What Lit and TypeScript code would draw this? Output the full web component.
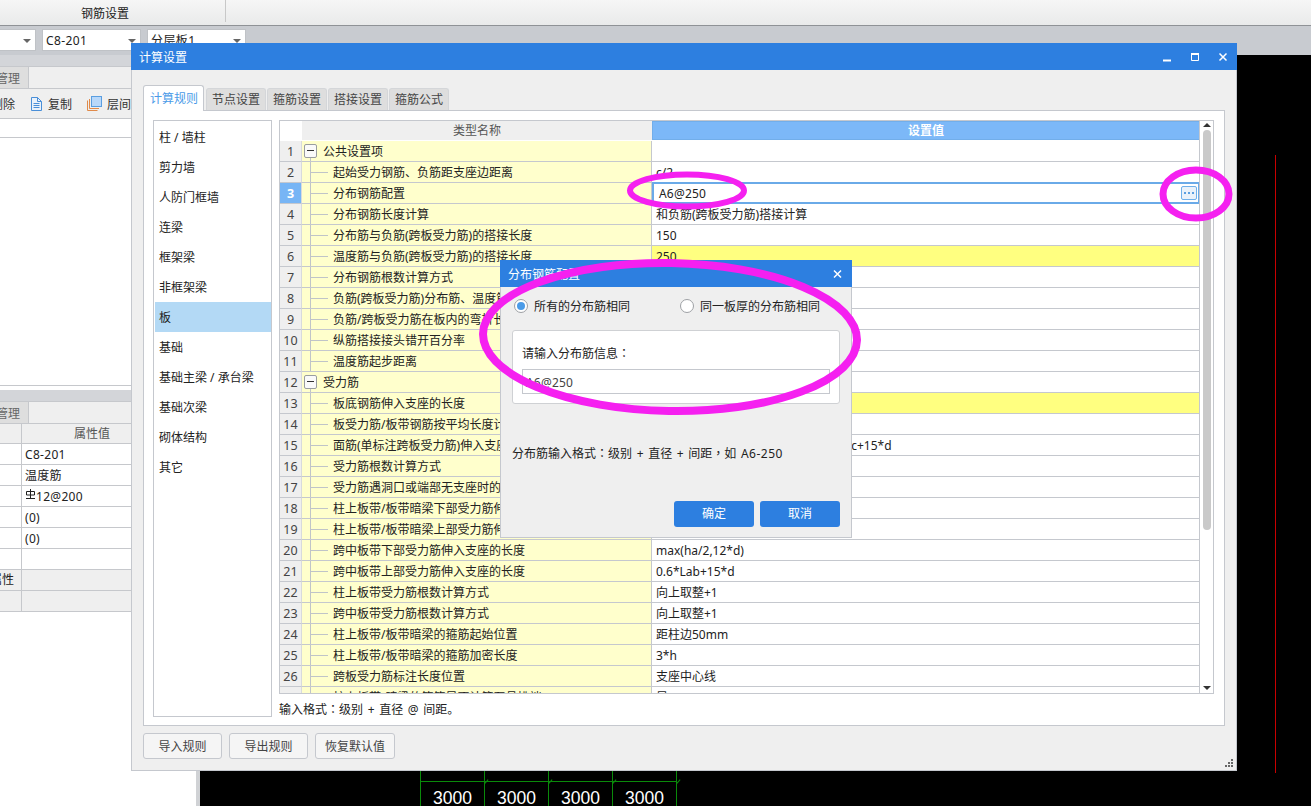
import { LitElement, html, css, svg } from "lit";
import { customElement } from "lit/decorators.js";

type Row = { n: number; name: string; value?: string; group?: boolean; hi?: boolean; edit?: boolean };

const rows: Row[] = [
  { n: 1, name: "公共设置项", group: true },
  { n: 2, name: "起始受力钢筋、负筋距支座边距离", value: "c/2" },
  { n: 3, name: "分布钢筋配置", value: "A6@250", edit: true },
  { n: 4, name: "分布钢筋长度计算", value: "和负筋(跨板受力筋)搭接计算" },
  { n: 5, name: "分布筋与负筋(跨板受力筋)的搭接长度", value: "150" },
  { n: 6, name: "温度筋与负筋(跨板受力筋)的搭接长度", value: "250", hi: true },
  { n: 7, name: "分布钢筋根数计算方式", value: "" },
  { n: 8, name: "负筋(跨板受力筋)分布筋、温度筋是否带弯钩", value: "" },
  { n: 9, name: "负筋/跨板受力筋在板内的弯折长度", value: "" },
  { n: 10, name: "纵筋搭接接头错开百分率", value: "" },
  { n: 11, name: "温度筋起步距离", value: "" },
  { n: 12, name: "受力筋", group: true },
  { n: 13, name: "板底钢筋伸入支座的长度", value: "", hi: true },
  { n: 14, name: "板受力筋/板带钢筋按平均长度计算", value: "" },
  { n: 15, name: "面筋(单标注跨板受力筋)伸入支座的锚固长度", value: "能直锚就直锚,否则按公式计算:ha-bhc+15*d" },
  { n: 16, name: "受力筋根数计算方式", value: "" },
  { n: 17, name: "受力筋遇洞口或端部无支座时的弯折长度", value: "" },
  { n: 18, name: "柱上板带/板带暗梁下部受力筋伸入支座的长度", value: "" },
  { n: 19, name: "柱上板带/板带暗梁上部受力筋伸入支座的长度", value: "" },
  { n: 20, name: "跨中板带下部受力筋伸入支座的长度", value: "max(ha/2,12*d)" },
  { n: 21, name: "跨中板带上部受力筋伸入支座的长度", value: "0.6*Lab+15*d" },
  { n: 22, name: "柱上板带受力筋根数计算方式", value: "向上取整+1" },
  { n: 23, name: "跨中板带受力筋根数计算方式", value: "向上取整+1" },
  { n: 24, name: "柱上板带/板带暗梁的箍筋起始位置", value: "距柱边50mm" },
  { n: 25, name: "柱上板带/板带暗梁的箍筋加密长度", value: "3*h" },
  { n: 26, name: "跨板受力筋标注长度位置", value: "支座中心线" },
  { n: 27, name: "柱上板带/暗梁的箍筋是否计算至悬挑端", value: "是" },
];

const sideItems = ["柱 / 墙柱", "剪力墙", "人防门框墙", "连梁", "框架梁", "非框架梁", "板", "基础", "基础主梁 / 承台梁", "基础次梁", "砌体结构", "其它"];
const tabs = ["计算规则", "节点设置", "箍筋设置", "搭接设置", "箍筋公式"];
const props = ["C8-201", "温度筋", "⌀12@200", "(0)", "(0)", ""];

@customElement("app-root")
export class AppRoot extends LitElement {
  static styles = css`
    :host { display: block; width: 1311px; height: 806px; position: relative; overflow: hidden; background: #000;
      font-family: "Noto Sans", "Noto Sans CJK SC", sans-serif; font-size: 12px; color: #222; }
    * { box-sizing: border-box; }
    .tc { font-family: "Noto Sans CJK TC", sans-serif; }
    .shell { width: 1311px; height: 806px; display: flex; flex-direction: column; }
    .menubar { height: 26px; flex: none; background: linear-gradient(#f6f6f6, #e9eaea); border-bottom: 1px solid #8f9296; display: flex; }
    .menutab { width: 226px; height: 22px; border-right: 1px solid #c8c8c8; display: flex; align-items: center; justify-content: center; color: #222; padding-right: 15px; padding-top: 4px; }
    .combos { height: 29px; flex: none; background: #c8cbd0; display: flex; gap: 6px; padding-top: 3px; overflow: hidden; margin-left: -63px; }
    .combo { width: 99px; height: 22px; background: #fff; border: 1px solid #bfc2c6; display: flex; align-items: center; padding-left: 3px; position: relative; letter-spacing: .4px; }
    .combo::after { content: ""; position: absolute; right: 4px; top: 9px; border: 4px solid transparent; border-top-color: #666; border-bottom: 0; }
    .main { flex: 1; display: flex; min-height: 0; }
    .leftp { width: 200px; flex: none; background: #fff; border-right: 4px solid #d0d2d5; display: flex; flex-direction: column; }
    .graybar { height: 11px; flex: none; background: #d3d5d9; }
    .ltabs { height: 23px; flex: none; background: #efefef; border-bottom: 1px solid #c6c8cc; border-top: 1px solid #c6c8cc; display: flex; }
    .ltab { width: 29px; background: #dedede; border-right: 1px solid #c6c8cc; color: #666; display: flex; align-items: center; justify-content: flex-end; padding-right: 8px; white-space: nowrap; overflow: hidden; }
    .ltools { height: 30px; flex: none; background: #efefef; display: flex; align-items: center; color: #333; border-bottom: 1px solid #c6c8cc; position: relative; }
    .tool-del { width: 30px; flex: none; display: flex; justify-content: flex-end; padding-right: 15px; overflow: hidden; white-space: nowrap; }
    .tool { display: flex; align-items: center; gap: 5px; margin-right: 15px; white-space: nowrap; }
    .lblank { height: 19px; flex: none; border-bottom: 1px solid #c6c8cc; }
    .lfill { height: 248px; flex: none; border-bottom: 1px solid #c6c8cc; }
    .pbar { height: 4px; flex: none; }
    .phead { height: 20px; flex: none; background: #efefef; border-bottom: 1px solid #c6c8cc; display: grid; grid-template-columns: 22px 140px; }
    .phead div:last-child { border-left: 1px solid #c6c8cc; text-align: center; color: #555; line-height: 20px; margin-left: -1px; }
    .prow { height: 21px; flex: none; display: grid; grid-template-columns: 21px 1fr; border-bottom: 1px solid #c6c8cc; }
    .prow .v { border-left: 1px solid #c6c8cc; padding-left: 3px; line-height: 21px; letter-spacing: .3px; }
    .prow.gray { background: #efefef; }
    .prow .k { display: flex; justify-content: flex-end; padding-right: 7px; overflow: hidden; white-space: nowrap; line-height: 20px; }
    .canvas { flex: 1; position: relative; background: #000; }
    .redline { position: absolute; left: 1075px; top: 100px; width: 1px; height: 618px; background: #c80000; }
    .ruler { position: absolute; left: 220px; top: 716px; width: 260px; height: 35px; display: grid; grid-template-columns: repeat(4, 64px); border-left: 1px solid #0a8a0a; }
    .cell { border-right: 1px solid #0a8a0a; height: 35px; position: relative; color: #fff; font-family: "Liberation Sans", sans-serif; font-size: 17.5px; text-align: center; padding-top: 17px; }
    .cell::before { content: ""; position: absolute; left: -1px; right: -1px; top: 10px; height: 1px; background: #0a8a0a; }
    .cell::after { content: ""; position: absolute; right: -3px; top: 8px; width: 1px; height: 5px; background: #0a8a0a; transform: rotate(40deg); }

    .win { position: absolute; background: #efefef; border: 1px solid #c5c8ce; display: flex; flex-direction: column; }
    .main-win { left: 131px; top: 43px; width: 1106px; height: 728px; border-top: 0; }
    .title { flex: none; height: 27px; background: #2d7fe0; color: #fff; display: flex; align-items: center; padding-left: 8px; position: relative; margin: 0 -1px; }
    .wbody { flex: 1; min-height: 0; padding: 15px 11px 0; display: flex; flex-direction: column; }
    .tabs { height: 25px; flex: none; display: flex; align-items: flex-end; gap: 1px; }
    .tab { height: 22px; padding: 0 5px; background: #dedede; border: 1px solid #d4d6d9; border-bottom: 0; border-radius: 3px 3px 0 0; color: #444; line-height: 22px; }
    .tab.on { height: 26px; background: #fff; color: #4a9be8; border-color: #c5c8ce; padding: 0 5px 0 6px; line-height: 25px; margin-bottom: -1px; margin-right: 1px; position: relative; z-index: 1; }
    .panel { flex: none; height: 616px; background: #fff; border: 1px solid #c5c8ce; padding: 9px 10px 8px 9px; display: flex; gap: 7px; }
    .side { width: 119px; flex: none; border: 1px solid #c5c8ce; padding-top: 1px; }
    .side div { height: 30px; line-height: 32px; padding-left: 4px; color: #222; margin-left: 1px; white-space: nowrap; }
    .side div.on { background: #b3d9f5; }
    .gridwrap { flex: 1; min-width: 0; display: flex; flex-direction: column; }
    .grid { height: 574px; flex: none; border: 1px solid #c5c8ce; position: relative; overflow: hidden; }
    .ghead { height: 20px; display: flex; }
    .g0 { width: 22px; flex: none; }
    .gh1 { width: 350px; height: 19px; flex: none; background: #efefef; text-align: center; color: #555; line-height: 20px; }
    .gh2 { width: 548px; height: 19px; flex: none; background: #7cb8f8; color: #fff; text-align: center; line-height: 18px; border: 1px solid #72aeea; font-weight: 600; }
    .grow { height: 21px; display: flex; }
    .num { width: 22px; flex: none; background: #efefef; border-bottom: 1px solid #c5c8ce; border-right: 1px solid #d8dadd; text-align: center; line-height: 21px; color: #444; font-size: 12.5px; }
    .num.sel { background: #77b5f5; color: #fff; font-weight: 700; }
    .name { width: 350px; flex: none; background: #ffffcc; border-bottom: 1px solid #c5c8ce; border-right: 1px solid #c5c8ce; position: relative; line-height: 21px; white-space: nowrap; overflow: hidden; padding-left: 31px; color: #222; }
    .name.group { padding-left: 21px; }
    .name .vl { position: absolute; left: 8px; top: 0; bottom: 0; width: 1px; background: #c0c4c8; }
    .name .hl { position: absolute; left: 8px; top: 10px; width: 18px; height: 1px; background: #c0c4c8; }
    .name .box { position: absolute; left: 2px; top: 3px; width: 13px; height: 14px; border: 1px solid #9a9da0; border-radius: 2px; background: #fafafa; }
    .name .box::after { content: ""; position: absolute; left: 2px; right: 2px; top: 5px; height: 1px; background: #333; }
    .name .vl.lower { top: 17px; }
    .val { width: 548px; flex: none; background: #fff; border-bottom: 1px solid #c5c8ce; padding-left: 4px; line-height: 21px; white-space: nowrap; overflow: hidden; position: relative; }
    .val.hi { background: #ffff80; }
    .val.edit { border: 2px solid #6aaae8; height: 22px; margin-top: -1px; padding-left: 5px; line-height: 19px; letter-spacing: .2px; }
    .dots { position: absolute; right: 1px; top: 2px; width: 16px; height: 14px; border: 1px solid #6fb0ea; border-radius: 2px; background: #eaf2fa; display: flex; align-items: center; justify-content: center; gap: 2px; }
    .dots i { width: 2px; height: 2px; background: #5b9fe0; display: block; }
    .sb { position: absolute; right: 0; top: 0; bottom: 0; width: 14px; background: #fff; border-left: 1px solid #c5c8ce; }
    .sb .up { position: absolute; left: 3px; top: 2px; border: 4px solid transparent; border-bottom: 4px solid #333; border-top: 0; }
    .sb .down { position: absolute; left: 3px; bottom: 3px; border: 4px solid transparent; border-top: 4px solid #333; border-bottom: 0; }
    .sb .thumb { position: absolute; left: 3px; top: 9px; width: 8px; height: 400px; background: #c9c9c9; border-radius: 4px; }
    .hint { height: 26px; line-height: 29px; color: #222; word-spacing: 1.5px; }
    .btns { display: flex; gap: 7px; margin-top: 7px; flex: none; }
    .btn { width: 79px; height: 26px; border: 1px solid #c5c8ce; border-radius: 3px; background: #f5f5f5; color: #444; text-align: center; line-height: 25px; }
    .btn.wide { width: 80px; }
    .grip { position: absolute; right: 3px; bottom: 3px; display: grid; grid-template-columns: repeat(3, 2px); gap: 1px; }
    .grip i { width: 2px; height: 2px; background: #666; }
    .grip i.c3 { grid-column: 3; }
    .grip i.c2 { grid-column: 2; }

    .dlg { left: 500px; top: 260px; width: 352px; height: 278px; border-top: 0; }
    .x { position: absolute; top: 50%; transform: translateY(-50%); }
    .x.r8 { right: 8px; }
    .x.r10 { right: 10px; }
    .dbody { flex: 1; padding: 0 11px; display: flex; flex-direction: column; }
    .radios { height: 43px; flex: none; display: flex; align-items: center; padding-left: 2px; padding-bottom: 5px; }
    .radio { display: flex; align-items: center; gap: 6px; white-space: nowrap; }
    .radio + .radio { margin-left: 50px; }
    .dot { width: 14px; height: 14px; border-radius: 50%; border: 1px solid #9ea1a5; background: #fff; display: flex; align-items: center; justify-content: center; }
    .dot.on::after { content: ""; width: 8px; height: 8px; border-radius: 50%; background: #4a9be8; }
    .dbox { height: 74px; flex: none; background: #fff; border: 1px solid #cfd1d4; border-radius: 3px; padding: 13px 9px 0; }
    .dlabel { line-height: 18px; height: 25px; }
    .dinput { height: 25px; border: 1px solid #c5c8ce; padding-left: 3px; line-height: 25px; color: #444; background: #fff; letter-spacing: .2px; }
    .dnote { margin-top: 40px; line-height: 18px; color: #222; white-space: nowrap; word-spacing: 1.5px; }
    .lat { letter-spacing: .5px; }
    .dbtns { display: flex; justify-content: flex-end; gap: 6px; margin-top: 38px; }
    .dbtn { width: 80px; height: 26px; background: #2d7fe0; color: #fff; border-radius: 3px; text-align: center; line-height: 26px; }
    .marks { position: absolute; left: 0; top: 0; pointer-events: none; }
    .bar-sym { vertical-align: 2px; }
  `;

  private rowTpl(r: Row) {
    return html`<div class="grow">
      <div class="num ${r.edit ? "sel" : ""}">${r.n}</div>
      <div class="name ${r.group ? "group" : ""}">
        ${r.group
          ? html`<span class="vl lower"></span><span class="box"></span>`
          : html`<span class="vl"></span><span class="hl"></span>`}
        ${r.name}
      </div>
      <div class="val ${r.hi ? "hi" : ""} ${r.edit ? "edit" : ""}">
        ${r.value ?? ""}
        ${r.edit ? html`<span class="dots"><i></i><i></i><i></i></span>` : ""}
      </div>
    </div>`;
  }

  render() {
    return html`
      <div class="shell">
        <div class="menubar"><div class="menutab">钢筋设置</div></div>
        <div class="combos">
          <div class="combo"></div>
          <div class="combo">C8-201</div>
          <div class="combo">分层板1</div>
        </div>
        <div class="main">
          <div class="leftp">
            <div class="graybar"></div>
            <div class="ltabs"><div class="ltab">管理</div></div>
            <div class="ltools">
              <div class="tool-del">删除</div>
              <div class="tool">
                <svg width="13" height="14" viewBox="0 0 13 14"><path d="M1.5.5h6l4 4v9h-10z" fill="#eaf2fb" stroke="#4a8fd8"/><path d="M7.5.5v4h4M3.5 6.5h6M3.5 8.5h6M3.5 10.5h6" fill="none" stroke="#4a8fd8"/></svg>
                <span>复制</span>
              </div>
              <div class="tool">
                <svg width="15" height="15" viewBox="0 0 15 15"><path d="M.5 4.5v10h10" fill="none" stroke="#e08a4a"/><path d="M2.5 3v9.5H12" fill="none" stroke="#e08a4a"/><rect x="4.5" y=".5" width="10" height="10" fill="#b8d8fa" stroke="#5a9ee0"/></svg>
                <span>层间复制</span>
              </div>
            </div>
            <div class="lblank"></div>
            <div class="lfill"></div>
            <div class="pbar"></div>
            <div class="graybar"></div>
            <div class="ltabs"><div class="ltab">管理</div></div>
            <div class="phead"><div></div><div>属性值</div></div>
            ${props.map(
              (p) => html`<div class="prow"><div class="k"></div><div class="v">${p === "⌀12@200"
                ? html`<svg class="bar-sym" width="11" height="10" viewBox="0 0 11 10"><path d="M5.5 0v9M1 9.5h9M1.5 2.5h8v3.5h-8z" fill="none" stroke="#222"/></svg>12@200`
                : p}</div></div>`
            )}
            <div class="prow gray"><div class="k">附加属性</div><div class="v"></div></div>
            <div class="prow gray"><div class="k"></div><div class="v"></div></div>
          </div>
          <div class="canvas">
            <div class="redline"></div>
            <div class="ruler">
              ${[0, 1, 2, 3].map(() => html`<div class="cell">3000</div>`)}
            </div>
          </div>
        </div>
      </div>

      <div class="win main-win">
        <div class="title">计算设置
          <svg class="x r8" width="66" height="10" viewBox="0 0 66 10">
            <path d="M0 8.5h8" stroke="#fff" stroke-width="2"/>
            <path d="M28.5 2.5h7v6h-7z" fill="none" stroke="#fff"/><path d="M28 2h8" stroke="#fff" stroke-width="2"/>
            <path d="M56.5 1.5l7 7M63.5 1.5l-7 7" stroke="#fff" stroke-width="1.5"/>
          </svg>
        </div>
        <div class="wbody">
          <div class="tabs">
            ${tabs.map((t, i) => html`<div class="tab ${i === 0 ? "on" : ""}">${t}</div>`)}
          </div>
          <div class="panel">
            <div class="side">
              ${sideItems.map((s) => html`<div class="${s === "板" ? "on" : ""}">${s}</div>`)}
            </div>
            <div class="gridwrap">
              <div class="grid">
                <div class="ghead">
                  <div class="g0"></div>
                  <div class="gh1">类型名称</div>
                  <div class="gh2">设置值</div>
                </div>
                ${rows.map((r) => this.rowTpl(r))}
                <div class="sb"><span class="up"></span><span class="thumb"></span><span class="down"></span></div>
              </div>
              <div class="hint">输入格式<span class="tc">：</span>级别 + 直径 @ 间距。</div>
            </div>
          </div>
          <div class="btns">
            <div class="btn">导入规则</div>
            <div class="btn">导出规则</div>
            <div class="btn wide">恢复默认值</div>
          </div>
        </div>
        <div class="grip"><i class="c3"></i><i class="c2"></i><i></i><i></i><i></i><i></i></div>
      </div>

      <div class="win dlg">
        <div class="title">分布钢筋配置
          <svg class="x r10" width="9" height="9" viewBox="0 0 9 9"><path d="M1 1l7 7M8 1l-7 7" stroke="#fff" stroke-width="1.5"/></svg>
        </div>
        <div class="dbody">
          <div class="radios">
            <div class="radio"><span class="dot on"></span>所有的分布筋相同</div>
            <div class="radio"><span class="dot"></span>同一板厚的分布筋相同</div>
          </div>
          <div class="dbox">
            <div class="dlabel">请输入分布筋信息<span class="tc">：</span></div>
            <div class="dinput">A6@250</div>
          </div>
          <div class="dnote">分布筋输入格式<span class="tc">：</span>级别 + 直径 + 间距<span class="tc">，</span>如 <span class="lat">A6-250</span></div>
          <div class="dbtns"><div class="dbtn">确定</div><div class="dbtn">取消</div></div>
        </div>
      </div>

      <svg class="marks" width="1311" height="806" viewBox="0 0 1311 806" fill="none" stroke="#f520f0">
        ${svg`<ellipse cx="687" cy="190.5" rx="57" ry="16" stroke-width="6"/>
        <ellipse cx="1196" cy="194" rx="33" ry="24" stroke-width="7"/>
        <ellipse cx="670" cy="337" rx="187" ry="74" stroke-width="8" transform="rotate(1 670 337)"/>`}
      </svg>
    `;
  }
}
